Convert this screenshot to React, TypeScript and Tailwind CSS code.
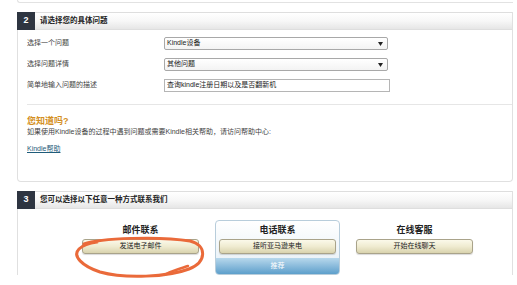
import React from "react";

const font = "font-['Liberation_Sans','Noto_Sans_CJK_SC',sans-serif]";

function SectionHeader({ num, title }: { num: string; title: string }) {
  return (
    <div className="flex h-[18px] items-center border-t border-b border-[#dedede] bg-gradient-to-b from-[#ffffff] via-[#f7f7f7] to-[#e6e6e6]">
      <div className="flex h-[18px] w-[18px] -ml-px items-center justify-center bg-[#2e3541] text-[9px] font-bold text-white">
        {num}
      </div>
      <div className="ml-[5px] text-[7.5px] font-bold text-[#222]">{title}</div>
    </div>
  );
}

function SelectBox({ value, width }: { value: string; width: string }) {
  return (
    <div
      className={`flex h-[13px] items-center justify-between rounded-[2px] border border-[#a8a8a8] bg-gradient-to-b from-white to-[#f3f3f3] pl-[2px] pr-[4px] text-[7px] text-[#222] ${width}`}
    >
      <span>{value}</span>
      <svg width="5" height="4" viewBox="0 0 5 4">
        <path d="M0 0 L5 0 L2.5 4 Z" fill="#222" />
      </svg>
    </div>
  );
}

function BeigeButton({ label }: { label: string }) {
  return (
    <div className="mx-auto flex h-[15px] w-[117px] items-center justify-center rounded-[3px] border border-[#a9a38a] bg-gradient-to-b from-[#fbf9ea] via-[#efebd0] to-[#d9d3ae] text-[7px] text-[#222] shadow-[0_1px_1px_rgba(0,0,0,0.15)]">
      {label}
    </div>
  );
}

export default function App() {
  return (
    <div className={`relative h-[285px] w-[517px] overflow-hidden bg-white ${font}`}>
      <div className="ml-[17px] w-[496px]">
        <div className="h-[3px] rounded-bl-[3px] border-b border-l border-[#e2e2e2]" />

        <section className="mt-[9px] rounded-b-[4px] border-x border-b border-[#e0e0e0]">
          <SectionHeader num="2" title="请选择您的具体问题" />
          <div className="pl-[9px] pt-[7px]">
            <div className="flex h-[13px] items-center">
              <div className="w-[137px] text-[7px] text-[#444]">选择一个问题</div>
              <SelectBox value="Kindle设备" width="w-[224px]" />
            </div>
            <div className="mt-[8px] flex h-[13px] items-center">
              <div className="w-[137px] text-[7px] text-[#444]">选择问题详情</div>
              <SelectBox value="其他问题" width="w-[224px]" />
            </div>
            <div className="mt-[8px] flex h-[13px] items-center">
              <div className="w-[137px] text-[7px] text-[#444]">简单地输入问题的描述</div>
              <div className="flex h-[13px] w-[226px] items-center border border-[#b5b5b5] bg-white pl-[2px] text-[7px] text-[#222]">
                查询kindle注册日期以及是否翻新机
              </div>
            </div>
            <div className="mt-[12px] border-t border-[#e6e6e6]" />
            <div className="mt-[10px] text-[9px] leading-[12px] font-bold text-[#d48f22]">您知道吗?</div>
            <div className="text-[7px] leading-[10px] text-[#444]">
              如果使用Kindle设备的过程中遇到问题或需要Kindle相关帮助，请访问帮助中心:
            </div>
            <div className="mt-[7px] pb-[27px] text-[7px] leading-[10px]">
              <span className="text-[#1f5c7a] underline">Kindle帮助</span>
            </div>
          </div>
        </section>

        <section className="mt-[9px] border-x border-[#e0e0e0]">
          <SectionHeader num="3" title="您可以选择以下任意一种方式联系我们" />
          <div className="grid grid-cols-[137px_137px_137px] pl-[54px] pt-[11px]">
            <div className="mx-[6px] border border-transparent pt-[3px]">
              <div className="text-center text-[9px] leading-[12px] font-bold text-[#222]">邮件联系</div>
              <div className="mt-[3px]">
                <BeigeButton label="发送电子邮件" />
              </div>
            </div>
            <div className="mx-[6px] overflow-hidden rounded-[4px] border border-[#b8cddb] bg-gradient-to-b from-[#ffffff] to-[#e3eef5] pt-[3px]">
              <div className="text-center text-[9px] leading-[12px] font-bold text-[#222]">电话联系</div>
              <div className="mt-[3px]">
                <BeigeButton label="接听亚马逊来电" />
              </div>
              <div className="mt-[4px] flex h-[16px] items-center justify-center bg-gradient-to-b from-[#b7d8ec] to-[#5d9fcb] text-[7px] text-white">
                推荐
              </div>
            </div>
            <div className="mx-[6px] border border-transparent pt-[3px]">
              <div className="text-center text-[9px] leading-[12px] font-bold text-[#222]">在线客服</div>
              <div className="mt-[3px]">
                <BeigeButton label="开始在线聊天" />
              </div>
            </div>
          </div>
        </section>
      </div>

      <svg
        className="pointer-events-none absolute left-0 top-0"
        width="517"
        height="285"
        viewBox="0 0 517 285"
      >
        <path
          d="M84 244 C100 238 160 236 190 241 C207 245 207 262 189 269 C168 277 125 279 100 272 C82 266 72 256 79 249 C83 245 90 243 97 242"
          fill="none"
          stroke="#ea6a3a"
          strokeWidth="3"
          strokeLinecap="round"
        />
        <path
          d="M166 274 C174 270 182 268 188 266"
          fill="none"
          stroke="#ea6a3a"
          strokeWidth="2.5"
          strokeLinecap="round"
        />
      </svg>
    </div>
  );
}
